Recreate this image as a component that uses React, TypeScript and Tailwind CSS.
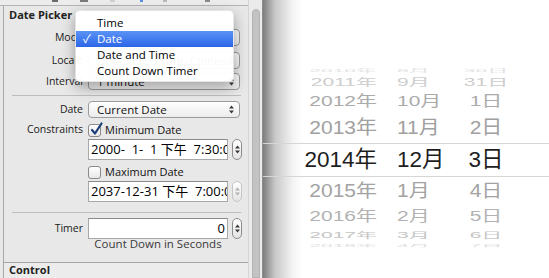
function UpDown({ light }: { light?: boolean }) {
  const c = light ? '#b0b0b0' : '#3a3a3a';
  return (
    <svg width="5" height="9" viewBox="0 0 5 9">
      <path d="M0 3.5 L2.5 0.5 L5 3.5Z" fill={c} />
      <path d="M0 5.5 L2.5 8.5 L5 5.5Z" fill={c} />
    </svg>
  );
}

function Stepper({ disabled }: { disabled?: boolean }) {
  return (
    <div
      className={`ml-[4px] w-[10px] h-[21px] rounded-full border ${disabled ? 'border-[#c6c6c6]' : 'border-[#8c8c8c]'} bg-gradient-to-b from-white to-[#e4e4e4] flex items-center justify-center`}
    >
      <UpDown light={disabled} />
    </div>
  );
}

function PopUp({ children }: { children?: React.ReactNode }) {
  return (
    <div className="w-[152px] h-[17px] rounded-[4px] border border-[#9b9b9b] bg-gradient-to-b from-white to-[#ececec] flex items-center pl-[8px] pr-[5px] text-[11.5px] text-[#111]">
      <span className="flex-1 whitespace-nowrap overflow-hidden">{children}</span>
      <UpDown />
    </div>
  );
}

function Checkbox({ checked }: { checked?: boolean }) {
  return (
    <div className="relative w-[13px] h-[13px] rounded-[3px] border border-[#8a8a8a] bg-gradient-to-b from-white to-[#e8e8e8]">
      {checked && (
        <svg className="absolute left-[1px] top-[-3px]" width="13" height="14" viewBox="0 0 13 14">
          <path d="M2 8 L5 11.5 L11.5 1.5" stroke="#1c3f7a" strokeWidth="2.2" fill="none" strokeLinecap="round" strokeLinejoin="round" />
        </svg>
      )}
    </div>
  );
}

function Row({ label, children, className = '' }: { label?: string; children: React.ReactNode; className?: string }) {
  return (
    <div className={`flex items-center ${className}`}>
      <div className="w-[80px] pr-[1px] text-right text-[10.5px] text-[#1a1a1a] whitespace-nowrap">{label}</div>
      <div className="ml-[4px] flex items-center">{children}</div>
    </div>
  );
}

function Field({ children, right }: { children: React.ReactNode; right?: boolean }) {
  return (
    <div
      className={`w-[140px] h-[21px] bg-white border border-[#a8a8a8] border-t-[#8a8a8a] overflow-hidden whitespace-pre px-[2px] text-[13px] leading-[19px] text-black ${right ? 'text-right' : ''}`}
    >
      {children}
    </div>
  );
}

type WRow = { y: string; m: string; d: string; h: string; s: string; c: string };

const wheel: WRow[] = [
  { y: '2010年', m: '8月', d: '30日', h: 'h-[10px]', s: 'scale-y-[0.2]', c: 'text-[#e2e2e2]' },
  { y: '2011年', m: '9月', d: '31日', h: 'h-[12px]', s: 'scale-y-[0.5]', c: 'text-[#cdcdcd]' },
  { y: '2012年', m: '10月', d: '1日', h: 'h-[25px]', s: 'scale-y-[0.72]', c: 'text-[#ababab]' },
  { y: '2013年', m: '11月', d: '2日', h: 'h-[30px]', s: 'scale-y-[0.9]', c: 'text-[#a0a0a0]' },
];

const wheelBelow: WRow[] = [
  { y: '2015年', m: '1月', d: '4日', h: 'h-[28px]', s: 'scale-y-[0.85]', c: 'text-[#a3a3a3]' },
  { y: '2016年', m: '2月', d: '5日', h: 'h-[22px]', s: 'scale-y-[0.68]', c: 'text-[#b2b2b2]' },
  { y: '2017年', m: '3月', d: '6日', h: 'h-[15px]', s: 'scale-y-[0.4]', c: 'text-[#c6c6c6]' },
  { y: '2018年', m: '4月', d: '7日', h: 'h-[8px]', s: 'scale-y-[0.15]', c: 'text-[#e0e0e0]' },
];

function WheelRow({ r }: { r: WRow }) {
  return (
    <div className={`flex items-center overflow-hidden ${r.h}`}>
      <div className={`flex items-center text-[21px] leading-[24px] ${r.s} ${r.c}`}>
        <span className="w-[114px] text-right">{r.y}</span>
        <span className="ml-[20px] w-[59px]">{r.m}</span>
        <span className="w-[60px] text-center">{r.d}</span>
      </div>
    </div>
  );
}

export default function App() {
  return (
    <div className="flex w-[549px] h-[278px] overflow-hidden bg-white font-['Open_Sans','Noto_Sans_CJK_SC',sans-serif]">
      {/* inspector */}
      <div className="relative w-[248px] h-full bg-[#e8e8e8] flex flex-col">
        <div className="h-[6px] border-b border-[#b4b4b4] bg-[#ececec] flex items-start">
          <div className="ml-[52px] w-[6px] h-[2px] bg-[#6a6a6a]" />
          <div className="ml-[22px] w-[8px] h-[2px] bg-[#7a7a7a]" />
          <div className="ml-[22px] w-[5px] h-[2px] bg-[#d0d0d0]" />
          <div className="ml-[25px] w-[3px] h-[2px] bg-[#5a8ee0]" />
          <div className="ml-[20px] w-[4px] h-[2px] bg-[#b8b8b8]" />
          <div className="ml-[38px] w-[5px] h-[2px] bg-[#8a8a8a]" />
        </div>
        <div className="ml-[3px] flex-1 flex flex-col border-l border-[#a8a8a8]">
          <div className="h-[257px] border-b border-[#a5a5a5] flex flex-col">
            <div className="h-[18px] pl-[5px] pt-[1px] flex items-center text-[11px] font-bold text-[#222]">Date Picker</div>
            <Row label="Mode" className="mt-[5px] h-[17px]">
              <PopUp>Date</PopUp>
            </Row>
            <Row label="Locale" className="mt-[6px] h-[17px]">
              <PopUp>Default (Current, Chinese)</PopUp>
            </Row>
            <Row label="Interval" className="mt-[4px] h-[17px]">
              <PopUp>1 minute</PopUp>
            </Row>
            <div className="mt-[5px] ml-[8px] w-[229px] h-px bg-[#bdbdbd]" />
            <Row label="Date" className="mt-[5px] h-[17px]">
              <PopUp>Current Date</PopUp>
            </Row>
            <Row label="Constraints" className="mt-[5px] h-[14px]">
              <Checkbox checked />
              <span className="ml-[4px] text-[11px] text-[#111]">Minimum Date</span>
            </Row>
            <Row className="mt-[2px] h-[21px]">
              <Field>{'2000-  1-  1 下午  7:30:00'}</Field>
              <Stepper />
            </Row>
            <Row className="mt-[5px] h-[14px]">
              <Checkbox />
              <span className="ml-[4px] text-[11px] text-[#111]">Maximum Date</span>
            </Row>
            <Row className="mt-[2px] h-[21px]">
              <Field>{'2037-12-31 下午  7:00:00'}</Field>
              <Stepper disabled />
            </Row>
            <div className="mt-[10px] ml-[8px] w-[229px] h-px bg-[#bdbdbd]" />
            <Row label="Timer" className="mt-[5px] h-[21px]">
              <Field right>0</Field>
              <Stepper />
            </Row>
            <Row className="-mt-[2px] h-[14px]">
              <div className="w-[140px] text-center text-[11.5px] leading-[14px] text-[#3a3a3a]">Count Down in Seconds</div>
            </Row>
          </div>
          <div className="h-[15px] pl-[5px] flex items-center text-[11px] font-bold text-[#222] bg-[#ececec]">Control</div>
        </div>

        {/* mode pop-up menu */}
        <div className="absolute left-[75px] top-[10px] w-[159px] h-[72px] py-[4px] rounded-[5px] bg-white/[0.97] border border-black/10 shadow-[0_5px_14px_rgba(0,0,0,0.35)] text-[11.5px] text-black">
          <div className="h-[16px] pl-[21px] flex items-center">Time</div>
          <div className="h-[16px] flex items-center bg-gradient-to-b from-[#5b92f6] to-[#2c66e8] text-white">
            <span className="w-[21px] pl-[7px]">✓</span>
            <span>Date</span>
          </div>
          <div className="h-[16px] pl-[21px] flex items-center">Date and Time</div>
          <div className="h-[16px] pl-[21px] flex items-center">Count Down Timer</div>
        </div>
      </div>

      {/* scroller */}
      <div className="w-[15px] h-full bg-[#ebebeb] border-l border-[#d4d4d4] border-r border-r-[#8c8c8c] pt-[9px] pl-[3px]">
        <div className="w-[8px] h-full rounded-t-full bg-[#c3c3c3] border border-[#b2b2b2]" />
      </div>

      {/* date wheel */}
      <div className="flex-1 h-full flex flex-col pt-[66px] bg-[linear-gradient(to_right,#7c7c7c,#c8c8c8_12px,#f4f4f4_30px,#ffffff_40px)] font-['Liberation_Sans','Noto_Sans_CJK_SC',sans-serif]">
        {wheel.map((r) => (
          <WheelRow key={r.y} r={r} />
        ))}
        <div className="h-[34px] border-y border-[#d6d6d6] flex items-center">
          <div className="flex items-center text-[22.5px] leading-[24px] text-[#1e1e1e]">
            <span className="w-[114px] text-right">2014年</span>
            <span className="ml-[20px] w-[59px]">12月</span>
            <span className="w-[60px] text-center">3日</span>
          </div>
        </div>
        {wheelBelow.map((r) => (
          <WheelRow key={r.y} r={r} />
        ))}
      </div>
    </div>
  );
}
